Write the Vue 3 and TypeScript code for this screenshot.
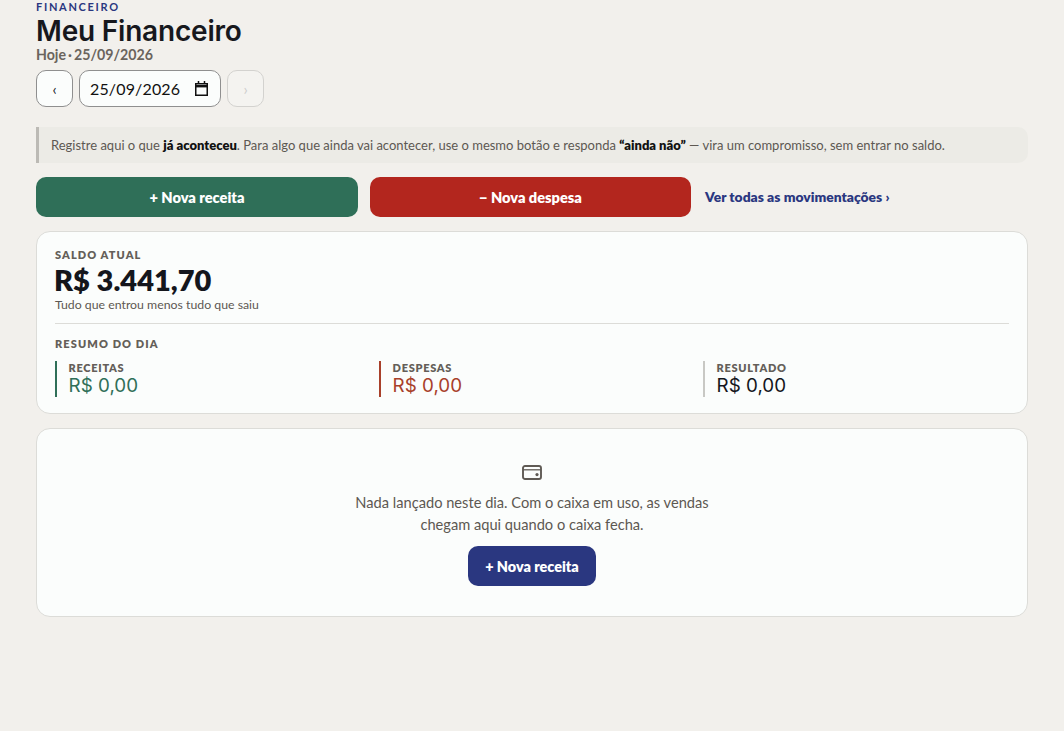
<script setup lang="ts">
const stats = [
  { label: 'RECEITAS', value: 'R$ 0,00', tone: 'green' },
  { label: 'DESPESAS', value: 'R$ 0,00', tone: 'red' },
  { label: 'RESULTADO', value: 'R$ 0,00', tone: 'neutral' },
]
</script>

<template>
  <main class="page">
    <header class="head">
      <div class="eyebrow">FINANCEIRO</div>
      <h1 class="title">Meu Financeiro</h1>
      <div class="today">Hoje<span class="dot">·</span>25/09/2026</div>
      <div class="datebar">
        <button class="nav" type="button">‹</button>
        <div class="dateinput">
          <span>25/09/2026</span>
          <svg width="13" height="15" viewBox="0 0 13 15" fill="none" stroke="#111" stroke-width="1.5">
            <path d="M.75 2.75h11.5v11.5H.75z" />
            <path d="M.75 5.2h11.5" stroke-width="2.4" />
            <path d="M3.5 0v3M9.5 0v3" />
          </svg>
        </div>
        <button class="nav disabled" type="button" disabled>›</button>
      </div>
    </header>

    <p class="notice">
      Registre aqui o que <strong>já aconteceu</strong>. Para algo que ainda vai acontecer, use o mesmo botão e responda
      <strong>“ainda não”</strong> — vira um compromisso, sem entrar no saldo.
    </p>

    <div class="actions">
      <button class="action income" type="button">+ Nova receita</button>
      <button class="action expense" type="button">− Nova despesa</button>
      <a class="all" href="#">Ver todas as movimentações ›</a>
    </div>

    <section class="card balance">
      <div class="label">SALDO ATUAL</div>
      <div class="amount">R$ 3.441,70</div>
      <div class="hint">Tudo que entrou menos tudo que saiu</div>
      <hr class="rule" />
      <div class="label">RESUMO DO DIA</div>
      <div class="stats">
        <div v-for="s in stats" :key="s.label" class="stat" :class="s.tone">
          <div class="stat-label">{{ s.label }}</div>
          <div class="stat-value">{{ s.value }}</div>
        </div>
      </div>
    </section>

    <section class="card empty">
      <svg class="wallet" width="20" height="15" viewBox="0 0 20 15" fill="none" stroke="#5f5a54" stroke-width="1.9">
        <rect x="1" y="1" width="18" height="13" rx="2" />
        <path d="M1 4.8h18" stroke-width="1.3" />
        <circle cx="15" cy="9.6" r="1.6" fill="#5f5a54" stroke="none" />
      </svg>
      <p class="empty-text">Nada lançado neste dia. Com o caixa em uso, as vendas<br />chegam aqui quando o caixa fecha.</p>
      <button class="cta" type="button">+ Nova receita</button>
    </section>
  </main>
</template>

<style>
html, body { margin: 0; background: #f2f0ec; }
</style>

<style scoped>
.page {
  box-sizing: border-box;
  min-height: 731px;
  padding: 0 36px;
  background: #f2f0ec;
  font-family: Lato, "Noto Sans", sans-serif;
  color: #14161c;
}
.head { display: flex; flex-direction: column; align-items: flex-start; }
.eyebrow { font-size: 11px; line-height: 14px; font-weight: 700; letter-spacing: 1.7px; color: #2a3780; }
.title { margin: 1px 0 0; font-family: Inter, sans-serif; font-size: 28px; line-height: 32px; font-weight: 600; color: #17181d; letter-spacing: -0.2px; }
.today { font-size: 14.2px; line-height: 16px; font-weight: 700; color: #6a645d; }
.dot { margin: 0 2px; }
.datebar { display: flex; gap: 6px; margin-top: 7px; }
.nav {
  width: 37px; height: 37px; padding: 0; border: 1px solid #8f8f8f; border-radius: 10px;
  background: #fbfdfc; color: #14161c; font-size: 15px; font-family: Lato, sans-serif;
}
.nav.disabled { border-color: #d3d2cf; color: #ccc; background: #f4f3f0; }
.dateinput {
  box-sizing: border-box; width: 142px; height: 37px; padding: 0 12px 0 10px;
  display: flex; align-items: center; justify-content: space-between;
  border: 1px solid #8f8f8f; border-radius: 10px; background: #fbfdfc;
  font-size: 16px; color: #111; letter-spacing: 0.15px;
}
.notice {
  box-sizing: border-box; margin: 20px 0 0; height: 36px; padding: 0 12px;
  display: block; line-height: 36px;
  border-left: 3px solid #bcbab5; border-radius: 0 10px 10px 0; background: #ecebe6;
  font-size: 13px; color: #5d5852; white-space: nowrap;
}
.notice strong { color: #111; font-weight: 800; }
.actions { display: grid; grid-template-columns: 322px 321px 1fr; column-gap: 12px; align-items: center; margin-top: 14px; }
.action {
  height: 40px; border: 0; border-radius: 10px; color: #fff;
  font-family: Lato, sans-serif; font-size: 14.6px; font-weight: 800;
}
.income { background: #2f6f58; }
.expense { background: #b3261e; }
.all { margin: 0 0 2px 2px; font-size: 13.85px; font-weight: 800; color: #2a3780; text-decoration: none; }
.card {
  box-sizing: border-box; border: 1px solid #dcdcd8; border-radius: 14px; background: #fbfdfc;
}
.balance { margin-top: 14px; height: 183px; padding: 16px 18px 0; }
.label { font-size: 11px; line-height: 14px; font-weight: 800; letter-spacing: 1.1px; color: #645f59; }
.amount { margin: 1px 0 0 -1px; font-size: 29px; line-height: 34px; font-weight: 800; color: #14161c; }
.hint { margin-top: 1px; font-size: 12.3px; line-height: 14px; color: #5d5852; }
.rule { margin: 11px 0 13px; border: 0; border-top: 1px solid #dcdcd8; }
.stats { display: grid; grid-template-columns: repeat(3, 1fr); column-gap: 18px; margin-top: 10px; }
.stat { height: 36px; padding-left: 11.6px; border-left: 2px solid #c8c8c4; }
.stat.green { border-left-color: #2f6f58; }
.stat.red { border-left-color: #a8402a; }
.stat-label { font-size: 11px; line-height: 14px; font-weight: 800; letter-spacing: 0.7px; color: #645f59; }
.stat-value { font-family: Inter, sans-serif; font-size: 18.8px; line-height: 22px; font-weight: 400; color: #14161c; }
.green .stat-value { color: #2f6f58; }
.red .stat-value { color: #a8402a; }
.empty {
  margin-top: 14px; height: 189px; padding-top: 36px;
  display: flex; flex-direction: column; align-items: center;
}
.wallet { display: block; }
.empty-text { margin: 12px 0 10px; text-align: center; font-size: 14.65px; line-height: 22px; color: #5d5852; }
.cta {
  width: 128px; height: 40px; border: 0; border-radius: 10px; background: #2a3780; color: #fff;
  font-family: Lato, sans-serif; font-size: 14.4px; font-weight: 800;
}
</style>
